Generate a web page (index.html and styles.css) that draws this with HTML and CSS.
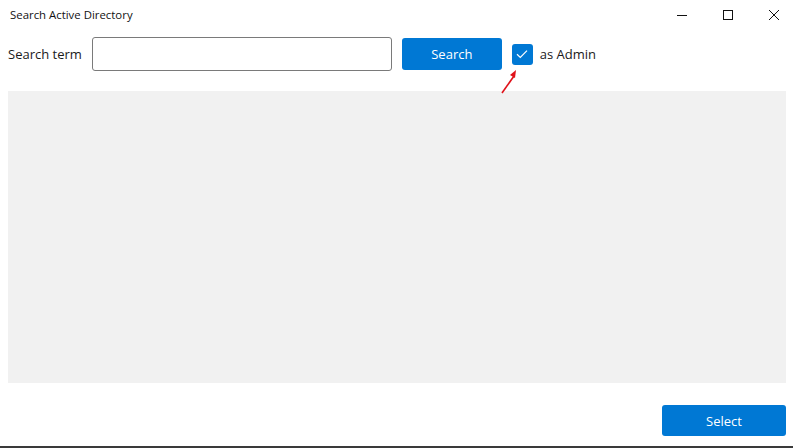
FILE: index.html
```html
<!DOCTYPE html>
<html>
<head>
<meta charset="utf-8">
<link rel="stylesheet" href="styles.css">
</head>
<body>
<div class="window">
  <div class="titlebar">
    <div class="title">Search Active Directory</div>
    <div class="caption">
      <div class="cbtn"><svg width="12" height="12" viewBox="0 0 12 12"><line x1="1" y1="6.5" x2="11" y2="6.5" stroke="#111" stroke-width="1"/></svg></div>
      <div class="cbtn"><svg width="12" height="12" viewBox="0 0 12 12"><rect x="1.5" y="1.5" width="9" height="9" fill="none" stroke="#111" stroke-width="1"/></svg></div>
      <div class="cbtn"><svg width="12" height="12" viewBox="0 0 12 12"><path d="M1 1 L11 11 M11 1 L1 11" stroke="#111" stroke-width="1"/></svg></div>
    </div>
  </div>
  <div class="toolbar">
    <span class="label">Search term</span>
    <div class="input"></div>
    <div class="btn search">Search</div>
    <div class="check">
      <svg width="12" height="10" viewBox="0 0 12 10"><path d="M1 5.2 L4.3 8.4 L11 1.6" fill="none" stroke="#fff" stroke-width="1.2"/></svg>
      <svg class="arrow" width="24" height="26" viewBox="0 0 24 26"><path d="M2 25 L14 8" stroke="#e0121a" stroke-width="1.6"/><path d="M10 7 L16 2 L15 10 Z" fill="#e0121a"/></svg>
    </div>
    <span class="label">as Admin</span>
  </div>
  <div class="panel"></div>
  <div class="footer">
    <div class="btn select">Select</div>
  </div>
  <div class="edge"></div>
</div>
</body>
</html>
```
FILE: styles.css
```css
html, body {
  margin: 0;
  padding: 0;
  background: #fff;
}
.window {
  width: 793px;
  height: 448px;
  display: flex;
  flex-direction: column;
  font-family: "Open Sans", "Noto Sans", sans-serif;
  color: #1a1a1a;
  overflow: hidden;
}
.titlebar {
  height: 30px;
  display: flex;
  align-items: center;
  justify-content: space-between;
  flex: none;
}
.title {
  padding-left: 10px;
  font-size: 11.4px;
  color: #111;
  margin-top: -1px;
}
.caption {
  display: flex;
  margin-right: -4px;
}
.cbtn {
  width: 46px;
  height: 30px;
  display: flex;
  align-items: center;
  justify-content: center;
}
.toolbar {
  display: flex;
  align-items: center;
  padding-left: 8px;
  margin-top: 7px;
  height: 34px;
  flex: none;
}
.label {
  font-size: 13px;
  color: #1a1a1a;
}
.input {
  margin-left: 10px;
  width: 298px;
  height: 32px;
  border: 1px solid #7a7a7a;
  border-radius: 3px;
  background: #fff;
}
.btn {
  background: #0078d4;
  color: #fff;
  font-size: 13px;
  border-radius: 3px;
  display: flex;
  align-items: center;
  justify-content: center;
}
.search {
  margin-left: 10px;
  width: 100px;
  height: 32px;
}
.check {
  position: relative;
  margin-left: 10px;
  margin-right: 7px;
  width: 21px;
  height: 21px;
  border-radius: 3px;
  background: #0078d4;
  display: flex;
  align-items: center;
  justify-content: center;
}
.arrow {
  position: absolute;
  left: -12px;
  top: 24px;
}
.panel {
  margin: 20px 7px 0 8px;
  height: 292px;
  background: #f1f1f1;
  flex: none;
}
.footer {
  display: flex;
  justify-content: flex-end;
  padding-right: 7px;
  margin-top: 22px;
  flex: none;
}
.select {
  width: 124px;
  height: 31px;
}
.edge {
  margin-top: 10px;
  height: 2px;
  background: #3a3a3a;
  flex: none;
}
```
